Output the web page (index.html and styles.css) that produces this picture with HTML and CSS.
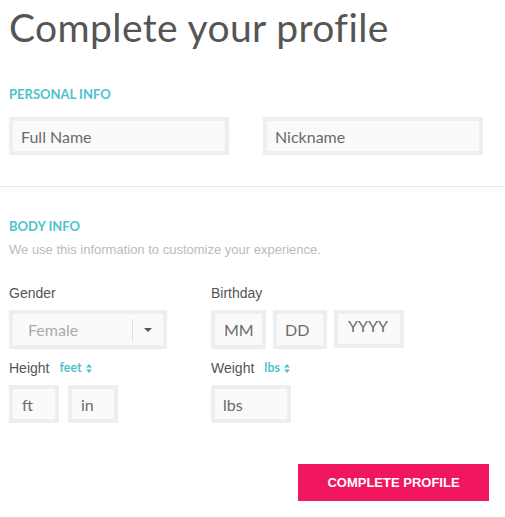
FILE: index.html
```html
<!DOCTYPE html>
<html>
<head>
<meta charset="utf-8">
<link rel="stylesheet" href="styles.css">
</head>
<body>
<div class="wrap">
  <h1 class="title">Complete your profile</h1>
  <section class="personal">
    <h2 class="section-label">PERSONAL INFO</h2>
    <div class="row-names">
      <div class="box box-name"><span class="ph">Full Name</span></div>
      <div class="box box-name"><span class="ph">Nickname</span></div>
    </div>
  </section>
</div>
<hr class="divider">
<div class="wrap">
  <section class="body-info">
    <h2 class="section-label">BODY INFO</h2>
    <p class="desc">We use this information to customize your experience.</p>
    <div class="grid">
      <div class="field">
        <div class="label">Gender</div>
        <div class="box select">
          <span class="ph ph-select">Female</span>
          <span class="sel-sep"></span>
          <span class="caret"></span>
        </div>
      </div>
      <div class="field">
        <div class="label">Birthday</div>
        <div class="inline-boxes">
          <div class="box box-mm"><span class="ph">MM</span></div>
          <div class="box box-dd"><span class="ph">DD</span></div>
          <div class="box box-yy"><span class="ph ph-yy">YYYY</span></div>
        </div>
      </div>
      <div class="field">
        <div class="label">Height <span class="unit">feet <svg class="updown" width="6" height="9" viewBox="0 0 6 9"><path d="M0 3.5 L3 0 L6 3.5Z M0 5.5 L3 9 L6 5.5Z" fill="#4ec3cc"/></svg></span></div>
        <div class="inline-boxes">
          <div class="box box-ft"><span class="ph">ft</span></div>
          <div class="box box-ft"><span class="ph">in</span></div>
        </div>
      </div>
      <div class="field">
        <div class="label">Weight <span class="unit">lbs <svg class="updown" width="6" height="9" viewBox="0 0 6 9"><path d="M0 3.5 L3 0 L6 3.5Z M0 5.5 L3 9 L6 5.5Z" fill="#4ec3cc"/></svg></span></div>
        <div class="inline-boxes">
          <div class="box box-lbs"><span class="ph">lbs</span></div>
        </div>
      </div>
    </div>
  </section>
  <div class="actions">
    <button class="btn">COMPLETE PROFILE</button>
  </div>
</div>
</body>
</html>
```
FILE: styles.css
```css
html, body {
  margin: 0;
  padding: 0;
  background: #fff;
}
body {
  font-family: "Lato", "Liberation Sans", sans-serif;
  color: #555;
}
.wrap {
  padding: 0 9px;
}
.title {
  margin: 0;
  padding-top: 7px;
  font-family: "Lato", sans-serif;
  font-weight: 400;
  font-size: 39px;
  line-height: 40px;
  color: #555;
  letter-spacing: 0.4px;
}
.section-label {
  margin: 0;
  font-family: "Lato", sans-serif;
  font-weight: 700;
  font-size: 13px;
  line-height: 16px;
  color: #4ec3cc;
}
.personal .section-label {
  margin-top: 39px;
}
.row-names {
  display: flex;
  gap: 34px;
  margin-top: 15px;
}
.box {
  box-sizing: border-box;
  border: 4px solid #eeeeee;
  background: #fafafa;
  display: flex;
  align-items: center;
}
.box-name {
  width: 220px;
  height: 38px;
  padding-left: 8px;
}
.ph {
  font-family: "Lato", sans-serif;
  font-size: 16px;
  color: #6a6a6a;
}
.divider {
  border: 0;
  border-top: 1px solid #e8e8e8;
  margin: 31px 0 0 0;
  height: 0;
}
.body-info .section-label {
  margin-top: 31px;
}
.desc {
  margin: 8px 0 0 0;
  font-family: "Liberation Sans", Arial, sans-serif;
  font-size: 13px;
  line-height: 16px;
  color: #bbbbbb;
}
.grid {
  display: grid;
  grid-template-columns: 202px 1fr;
  row-gap: 11px;
  margin-top: 27px;
}
.label {
  font-family: "Liberation Sans", Arial, sans-serif;
  font-size: 14px;
  line-height: 16px;
  color: #555;
  margin-bottom: 9px;
  display: flex;
  align-items: center;
}
.unit {
  font-family: "Lato", sans-serif;
  font-weight: 700;
  font-size: 12.5px;
  color: #4ec3cc;
  margin-left: 10px;
  display: inline-flex;
  align-items: center;
  gap: 4px;
}
.select {
  width: 158px;
  height: 39px;
  position: relative;
  padding-left: 15px;
}
.ph-select {
  color: #aaaaaa;
  flex: 1;
}
.sel-sep {
  width: 1px;
  height: 22px;
  background: #dddddd;
  margin-right: 11px;
}
.caret {
  width: 0;
  height: 0;
  border-left: 4px solid transparent;
  border-right: 4px solid transparent;
  border-top: 4px solid #555;
  margin-right: 11px;
}
.inline-boxes {
  display: flex;
  gap: 7px;
}
.box-mm, .box-dd {
  width: 55px;
  height: 39px;
  padding-left: 9px;
}
.box-dd {
  width: 54px;
  padding-left: 8px;
}
.box-yy {
  width: 70px;
  height: 38px;
  padding-left: 10px;
  align-items: flex-start;
  padding-top: 2px;
}
.box-ft {
  width: 50px;
  height: 38px;
  padding-left: 9px;
}
.box-ft + .box-ft {
  margin-left: 2px;
}
.box-lbs {
  width: 80px;
  height: 38px;
  padding-left: 8px;
}
.actions {
  display: flex;
  justify-content: flex-end;
  padding-right: 7px;
  margin-top: 41px;
}
.btn {
  width: 191px;
  height: 37px;
  border: 0;
  background: #f0175f;
  color: #fff;
  font-family: "Liberation Sans", Arial, sans-serif;
  font-weight: 700;
  font-size: 13px;
  padding: 0;
  cursor: pointer;
}
```
